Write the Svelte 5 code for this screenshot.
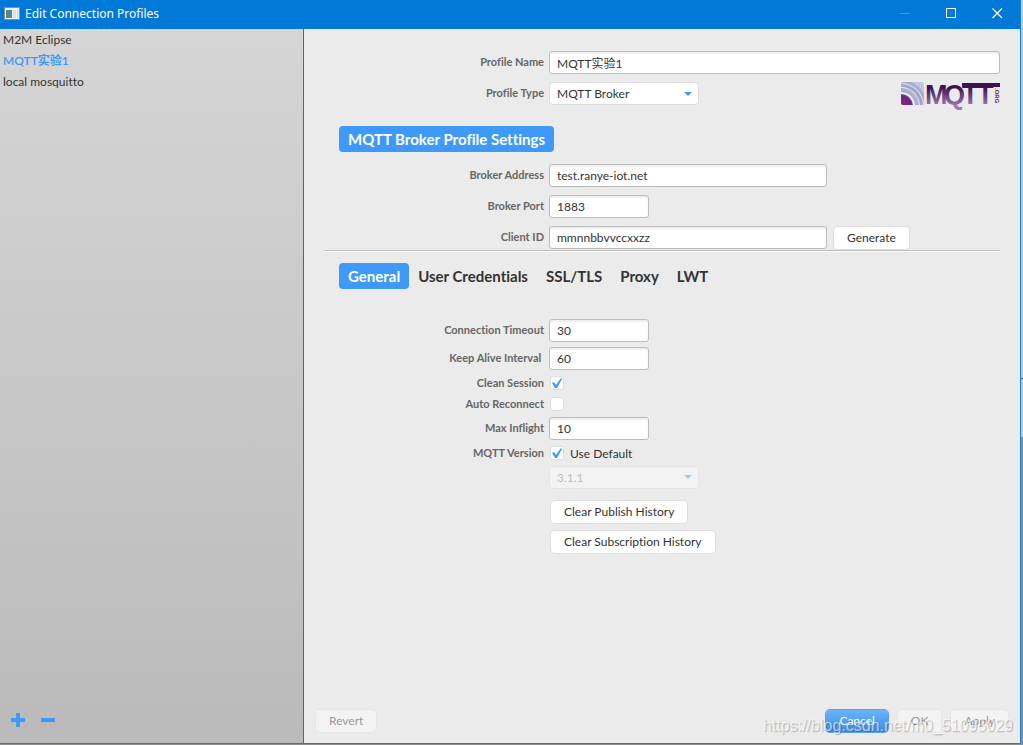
<script>
  let profiles = $state(['M2M Eclipse', 'MQTT实验1', 'local mosquitto']);
  let selected = $state(1);
  let profileName = $state('MQTT实验1');
  let profileType = $state('MQTT Broker');
  let address = $state('test.ranye-iot.net');
  let port = $state('1883');
  let clientId = $state('mmnnbbvvccxxzz');
  const tabs = ['General', 'User Credentials', 'SSL/TLS', 'Proxy', 'LWT'];
  let tab = $state('General');
  let timeout = $state('30');
  let keepAlive = $state('60');
  let clean = $state(true);
  let reconnect = $state(false);
  let inflight = $state('10');
  let useDefault = $state(true);
</script>

<div class="desktop">
  <div class="window">
    <header class="titlebar">
      <svg class="appicon" width="16" height="13" viewBox="0 0 16 13" aria-hidden="true">
        <defs>
          <linearGradient id="pane" x1="0" y1="0" x2="1" y2="1">
            <stop offset="0" stop-color="#4a7fb0" />
            <stop offset="1" stop-color="#4f9a6a" />
          </linearGradient>
        </defs>
        <rect x="0.5" y="0.5" width="15" height="12" fill="#f4f4f4" stroke="#8d8d8d" />
        <rect x="2" y="3" width="6" height="8" fill="url(#pane)" />
        <rect x="9" y="3" width="3" height="8" fill="#e2e2e2" />
        <rect x="13" y="3" width="1" height="8" fill="#cfd6cf" />
      </svg>
      <h1>Edit Connection Profiles</h1>
      <div class="winbuttons">
        <button aria-label="Minimize" disabled>
          <svg width="11" height="11" viewBox="0 0 11 11"><path d="M0 5.5H10" stroke="#3d9be6" fill="none" /></svg>
        </button>
        <button aria-label="Maximize">
          <svg width="11" height="11" viewBox="0 0 11 11"><rect x="0.5" y="0.5" width="9" height="9" stroke="#fff" fill="none" /></svg>
        </button>
        <button aria-label="Close">
          <svg width="11" height="11" viewBox="0 0 11 11"><path d="M0.5 0.5L10 10M10 0.5L0.5 10" stroke="#fff" stroke-width="1.2" fill="none" /></svg>
        </button>
      </div>
    </header>

    <div class="body">
      <aside>
        <ul>
          {#each profiles as p, i}
            <li><button class:active={i === selected} onclick={() => (selected = i)}>{p}</button></li>
          {/each}
        </ul>
        <div class="tools">
          <button aria-label="Add profile">
            <svg width="14" height="14" viewBox="0 0 14 14"><path d="M5 0h4v5h5v4h-5v5h-4v-5h-5v-4h5z" fill="#3f99f9" /></svg>
          </button>
          <button aria-label="Remove profile">
            <svg width="14" height="14" viewBox="0 0 14 14"><path d="M0 5h14v4h-14z" fill="#3f99f9" /></svg>
          </button>
        </div>
      </aside>

      <main>
        <div class="form">
          <div class="row">
            <label for="pname">Profile Name</label>
            <input id="pname" class="full" type="text" bind:value={profileName} />
          </div>
          <div class="row">
            <label for="ptype">Profile Type</label>
            <select id="ptype" bind:value={profileType}>
              <option>MQTT Broker</option>
            </select>
            <svg class="logo" width="100" height="26" viewBox="0 0 100 26" role="img" aria-label="MQTT.ORG">
              <defs>
                <linearGradient id="ink" gradientUnits="userSpaceOnUse" x1="0" y1="2" x2="0" y2="25">
                  <stop offset="0.2" stop-color="#3a1255" />
                  <stop offset="1" stop-color="#a07bb5" />
                </linearGradient>
                <linearGradient id="tile" x1="0" y1="1" x2="1" y2="0">
                  <stop offset="0" stop-color="#7d76b5" />
                  <stop offset="1" stop-color="#b9bddb" />
                </linearGradient>
                <radialGradient id="core" gradientUnits="userSpaceOnUse" cx="1" cy="25" r="13">
                  <stop offset="0" stop-color="#8a1f80" />
                  <stop offset="0.8" stop-color="#6b2c80" />
                  <stop offset="1" stop-color="#8a6aa8" />
                </radialGradient>
                <clipPath id="tileclip"><rect x="1" y="1" width="23" height="23" rx="2" /></clipPath>
              </defs>
              <g clip-path="url(#tileclip)">
                <rect x="1" y="1" width="23" height="23" fill="#c3c7de" />
                <circle cx="1" cy="25" r="26" fill="#a9abd0" />
                <circle cx="1" cy="25" r="23" fill="#dfe2ee" />
                <circle cx="1" cy="25" r="22" fill="#a3a4cd" />
                <circle cx="1" cy="25" r="19" fill="#e3e5f0" />
                <circle cx="1" cy="25" r="18" fill="url(#tile)" />
                <circle cx="1" cy="25" r="14" fill="#eeecf4" />
                <circle cx="1" cy="25" r="12" fill="url(#core)" />
              </g>
              <g class="word" fill="url(#ink)">
                <text x="25" y="23">M</text>
                <text x="44" y="23">Q</text>
                <text x="62" y="23">T</text>
                <text x="77" y="23">T</text>
              </g>
              <rect x="62" y="2" width="38" height="4" fill="#3a1255" />
              <text class="org" transform="translate(95 7) rotate(90)" fill="#4a2165">.ORG</text>
            </svg>
          </div>
        </div>

        <h2>MQTT Broker Profile Settings</h2>

        <div class="form">
          <div class="row">
            <label for="addr">Broker Address</label>
            <input id="addr" class="wide" type="text" bind:value={address} />
          </div>
          <div class="row">
            <label for="port">Broker Port</label>
            <input id="port" type="text" bind:value={port} />
          </div>
          <div class="row">
            <label for="cid">Client ID</label>
            <input id="cid" class="wide" type="text" bind:value={clientId} />
            <button class="btn">Generate</button>
          </div>
        </div>

        <div class="divider"></div>

        <nav>
          {#each tabs as t}
            <button class:active={t === tab} onclick={() => (tab = t)}>{t}</button>
          {/each}
        </nav>

        <div class="options">
          <div class="row">
            <label for="timeout">Connection Timeout</label>
            <input id="timeout" type="text" bind:value={timeout} />
          </div>
          <div class="row">
            <label for="keep">Keep Alive Interval&nbsp;</label>
            <input id="keep" type="text" bind:value={keepAlive} />
          </div>
          <div class="row check">
            <label for="clean">Clean Session</label>
            <input id="clean" type="checkbox" bind:checked={clean} />
          </div>
          <div class="row check">
            <label for="reconnect">Auto Reconnect</label>
            <input id="reconnect" type="checkbox" bind:checked={reconnect} />
          </div>
          <div class="row">
            <label for="inflight">Max Inflight</label>
            <input id="inflight" type="text" bind:value={inflight} />
          </div>
          <div class="row check">
            <label for="version">MQTT Version</label>
            <input id="default" type="checkbox" bind:checked={useDefault} />
            <label class="plain" for="default">Use Default</label>
          </div>
          <div class="row indent">
            <select id="version" disabled={useDefault}>
              <option>3.1.1</option>
            </select>
          </div>
        </div>

        <div class="clears">
          <button class="btn">Clear Publish History</button>
          <button class="btn">Clear Subscription History</button>
        </div>

        <footer>
          <button class="btn revert" disabled>Revert</button>
          <button class="btn primary">Cancel</button>
          <button class="btn" disabled>OK</button>
          <button class="btn" disabled>Apply</button>
        </footer>
      </main>
    </div>
    <div class="mark">https://blog.csdn.net/m0_51095029</div>
  </div>
</div>

<style>
  :global(body) {
    margin: 0;
    background: #a5a5a5;
  }
  .desktop,
  .desktop * {
    box-sizing: border-box;
  }
  .desktop {
    min-height: 100vh;
    display: flex;
    padding: 0 2px 1px 0;
    background: linear-gradient(#c6c6c6 0 378px, #555 378px 379px, #c6c6c6 379px 437px, #8c8c8c 437px);
    font: 12px/16px Lato, 'Noto Sans CJK SC', sans-serif;
    font-variant-ligatures: none;
    color: #333;
  }
  button,
  input,
  select {
    font: inherit;
    font-variant-ligatures: none;
    color: inherit;
    margin: 0;
  }
  button {
    border: 0;
    background: none;
    padding: 0;
    white-space: nowrap;
  }
  .window {
    position: relative;
    flex: 1;
    display: flex;
    flex-direction: column;
    border: solid #1580d8;
    border-width: 0 1px 1px 0;
  }
  .titlebar {
    display: flex;
    align-items: center;
    height: 29px;
    background: #0078d7;
    padding: 0 0 0 4px;
    color: #fff;
  }
  .appicon {
    margin-bottom: 3px;
  }
  h1 {
    flex: 1;
    margin: 0 0 2px 5px;
    font: 12px/16px 'Noto Sans', sans-serif;
  }
  .winbuttons {
    display: flex;
    margin-bottom: 2px;
  }
  .winbuttons button {
    width: 46px;
    height: 24px;
    display: flex;
    align-items: center;
    justify-content: center;
  }
  .body {
    flex: 1;
    display: flex;
  }
  aside {
    width: 304px;
    flex: none;
    display: flex;
    flex-direction: column;
    justify-content: space-between;
    border-right: 1px solid #626262;
    background: linear-gradient(#d5d5d5, #bababa);
  }
  ul {
    list-style: none;
    margin: 0;
    padding: 0 3px;
  }
  li {
    height: 21px;
    display: flex;
    align-items: center;
  }
  li .active {
    color: #3f99f9;
    font-weight: 600;
  }
  .tools {
    display: flex;
    gap: 16px;
    padding: 0 11px 16px;
  }
  .tools svg {
    display: block;
  }
  main {
    flex: 1;
    min-width: 0;
    display: flex;
    flex-direction: column;
    align-items: flex-start;
    background: #ebebeb;
    padding: 22px 20px 11px;
  }
  .form {
    width: 100%;
    display: flex;
    flex-direction: column;
    gap: 8px;
  }
  .row {
    display: flex;
    align-items: center;
    height: 23px;
  }
  .row > label:first-child {
    width: 220px;
    flex: none;
    margin-right: 5px;
    padding-bottom: 2px;
    text-align: right;
    font-size: 11px;
    font-weight: 700;
    color: #666;
  }
  input[type='text'] {
    width: 100px;
    height: 23px;
    border: 1px solid #bcbcbc;
    border-radius: 3px;
    background: #fff;
    box-shadow: inset 0 2px 2px #eee;
    padding: 0 7px;
    outline: 0;
  }
  input.full {
    width: auto;
    flex: 1;
    min-width: 0;
  }
  input.wide {
    width: 278px;
  }
  select {
    appearance: none;
    width: 150px;
    height: 23px;
    border: 1px solid #dcdcdc;
    border-radius: 4px;
    padding: 1px 7px 0;
    background: #fff url("data:image/svg+xml,%3Csvg xmlns='http://www.w3.org/2000/svg' width='8' height='4'%3E%3Cpath d='M0 0h8l-4 4z' fill='%233f99f9'/%3E%3C/svg%3E") no-repeat right 6px center;
  }
  select:disabled {
    opacity: 0.4;
    color: #777;
  }
  .logo {
    margin-left: auto;
    overflow: visible;
  }
  .word {
    font: 700 27px 'Liberation Sans', sans-serif;
  }
  .org {
    font: 700 6px 'Liberation Sans', sans-serif;
  }
  h2 {
    margin: 21px 0 12px 15px;
    height: 26px;
    padding: 0 9px;
    border-radius: 4px;
    background: #3f99f9;
    color: #fff;
    font-size: 15px;
    line-height: 27px;
    font-weight: 700;
  }
  .btn {
    height: 22px;
    padding: 0 13px;
    border-radius: 4px;
    background: #fff;
    box-shadow: 0 0 0 1px #dedede;
  }
  .row .btn {
    margin-left: 7px;
  }
  .divider {
    align-self: stretch;
    height: 2px;
    margin-top: 1px;
    border-top: 1px solid #bfbfbf;
    background: #fafafa;
  }
  nav {
    display: flex;
    margin: 11px 0 27px 15px;
  }
  nav button {
    height: 26px;
    padding: 0 9px;
    border-radius: 4px;
    font-size: 15px;
    font-weight: 700;
  }
  nav .active {
    background: #3f99f9;
    color: #fff;
  }
  .options .row {
    height: 28px;
  }
  .options .row > label:first-child {
    padding-bottom: 0;
  }
  .options .check {
    height: 21px;
  }
  .indent {
    padding-left: 225px;
  }
  input[type='checkbox'] {
    appearance: none;
    width: 14px;
    height: 14px;
    margin-left: 1px;
    border: 1px solid #dcdcdc;
    border-radius: 3px;
    background: #fff;
  }
  input[type='checkbox']:checked {
    background: #fff url("data:image/svg+xml,%3Csvg xmlns='http://www.w3.org/2000/svg' width='12' height='12'%3E%3Cpath d='M1 6l2-1 2 3L10 1l1 1L6 11H4z' fill='%233f99f9'/%3E%3C/svg%3E") no-repeat center;
  }
  .plain {
    margin-left: 6px;
    padding-top: 2px;
  }
  .clears {
    display: flex;
    flex-direction: column;
    align-items: flex-start;
    gap: 8px;
    padding: 10px 0 0 227px;
  }
  footer {
    align-self: stretch;
    display: flex;
    gap: 10px;
    margin: auto -8px 0 -8px;
  }
  .revert {
    margin-right: auto;
  }
  .btn:disabled {
    background: #f3f3f3;
    color: #999;
    box-shadow: 0 0 0 1px #e6e6e6;
  }
  .primary {
    color: #fff;
    background: linear-gradient(#6cb2fb, #3a8de8);
    box-shadow: 0 0 0 1px #5aa2ee;
  }
  .mark {
    position: absolute;
    right: 7px;
    bottom: 8px;
    font: 16px/18px 'Liberation Sans', sans-serif;
    color: rgba(255, 255, 255, 0.65);
    text-shadow: 1px 1px 1px rgba(0, 0, 0, 0.25);
    pointer-events: none;
  }
</style>
